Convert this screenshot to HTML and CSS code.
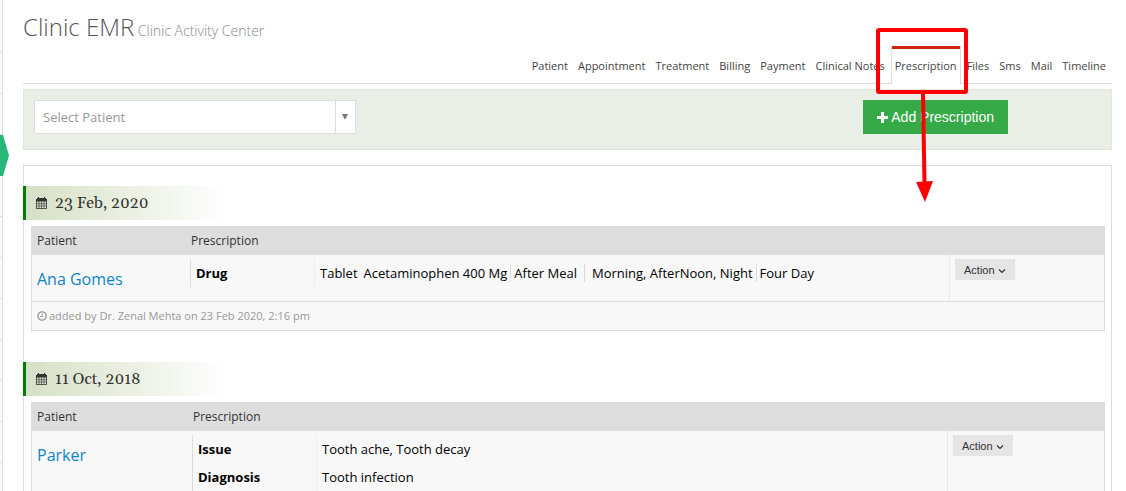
FILE: index.html
```html
<!DOCTYPE html>
<html lang="en">
<head>
<meta charset="utf-8">
<title>Clinic EMR</title>
<link rel="stylesheet" href="styles.css">
</head>
<body>
<svg class="sprite" aria-hidden="true">
  <symbol id="calendar" viewBox="0 0 11 12"><path fill-rule="evenodd" d="M0 2h1V1h1V0h1v1h5V0h1v1h1v1h1v9.500l-.5.500H.5L0 11.500zM.8 4.500v6.700h9.400V4.500z"/><path d="M3 4v8M5.500 4v8M8 4v8M.5 6.700h10M.5 9h10" stroke="currentColor" stroke-width=".6"/></symbol>
  <symbol id="chevron" viewBox="0 0 8 6"><path d="M1 1.500 4 4.500 7 1.500" fill="none" stroke="currentColor" stroke-width="1.200"/></symbol>
  <symbol id="clock" viewBox="0 0 10 10"><circle cx="5" cy="5" r="4.200" fill="none" stroke="currentColor" stroke-width="1.300"/><path d="M5.300 2.500v3H3" fill="none" stroke="currentColor"/></symbol>
  <symbol id="plus" viewBox="0 0 11 11"><path d="M4 0h3v4h4v3H7v4H4V7H0V4h4z"/></symbol>
</svg>
<div class="page">
  <aside class="rail">
    <span class="rail-item first"></span><span class="rail-item"></span><span class="rail-item"></span><span class="rail-item current"></span><span class="rail-item"></span><span class="rail-item"></span><span class="rail-item"></span><span class="rail-item"></span><span class="rail-item"></span><span class="rail-item"></span><span class="rail-item"></span>
  </aside>
  <main class="main">
    <h1 class="title">Clinic EMR<small> Clinic Activity Center</small></h1>
    <nav class="tabs">
      <a class="tab" href="#">Patient</a>
      <a class="tab" href="#">Appointment</a>
      <a class="tab" href="#">Treatment</a>
      <a class="tab" href="#">Billing</a>
      <a class="tab" href="#">Payment</a>
      <a class="tab" href="#">Clinical Notes</a>
      <span class="tab-mark">
        <a class="tab active" href="#">Prescription</a>
        <svg class="callout" viewBox="0 0 92 174" width="92" height="174" aria-hidden="true">
          <rect x="2" y="2" width="88" height="62" rx="1" fill="none" stroke="#f00" stroke-width="4"/>
          <path d="M47 66l1.500 90" stroke="#f00" stroke-width="4"/>
          <path d="M40 154l17-1-8 21z" fill="#f00"/>
        </svg>
      </span>
      <a class="tab" href="#">Files</a>
      <a class="tab" href="#">Sms</a>
      <a class="tab" href="#">Mail</a>
      <a class="tab" href="#">Timeline</a>
    </nav>
    <div class="toolbar">
      <span class="picker">
        <select class="picker-select" aria-label="Select Patient"><option>Select Patient</option></select>
        <span class="picker-arrow"><svg width="6" height="6" viewBox="0 0 6 6"><path d="M0 0h6L3.500 5h-1z" fill="#777"/></svg></span>
      </span>
      <button class="add" type="button"><svg class="icon-plus"><use href="#plus"/></svg>Add Prescription</button>
    </div>
    <section class="panel">
      <h2 class="date"><svg class="icon-calendar"><use href="#calendar"/></svg>23 Feb, 2020</h2>
      <table class="record">
        <colgroup><col class="col-name"><col><col class="col-action"></colgroup>
        <thead><tr><th>Patient</th><th>Prescription</th><th></th></tr></thead>
        <tbody>
          <tr class="entry">
            <td class="name"><a href="#">Ana Gomes</a></td>
            <td class="info">
              <table class="details">
                <tr><th scope="row">Drug</th><td><div class="drug"><span class="dose"><span>Tablet</span><span>Acetaminophen 400 Mg</span></span><span class="meal">After Meal</span><span class="times">Morning, AfterNoon, Night</span><span>Four Day</span></div></td></tr>
              </table>
            </td>
            <td class="action-cell"><button class="action" type="button">Action <svg class="icon-chevron"><use href="#chevron"/></svg></button></td>
          </tr>
          <tr class="added"><td colspan="3"><svg class="icon-clock"><use href="#clock"/></svg>added by Dr. Zenal Mehta on 23 Feb 2020, 2:16 pm</td></tr>
        </tbody>
      </table>
      <h2 class="date"><svg class="icon-calendar"><use href="#calendar"/></svg>11 Oct, 2018</h2>
      <table class="record wide">
        <colgroup><col class="col-name"><col><col class="col-action"></colgroup>
        <thead><tr><th>Patient</th><th>Prescription</th><th></th></tr></thead>
        <tbody>
          <tr class="entry">
            <td class="name"><a href="#">Parker</a></td>
            <td class="info">
              <table class="details">
                <tr><th scope="row">Issue</th><td>Tooth ache, Tooth decay</td></tr>
                <tr><th scope="row">Diagnosis</th><td>Tooth infection</td></tr>
              </table>
            </td>
            <td class="action-cell"><button class="action" type="button">Action <svg class="icon-chevron"><use href="#chevron"/></svg></button></td>
          </tr>
        </tbody>
      </table>
    </section>
  </main>
</div>
</body>
</html>
```
FILE: styles.css
```css
* { box-sizing: border-box; }
body {
  margin: 0;
  background: #fff;
  color: #333;
  font: 13px/18px "Open Sans", sans-serif;
}
a { color: inherit; text-decoration: none; }
.sprite { display: none; }
.page { display: flex; height: 100vh; overflow: hidden; }

.rail {
  display: flex;
  flex-direction: column;
  flex: none;
  width: 3px;
  background: #fafafa;
  border-right: 1px solid #ddd;
}
.rail-item { position: relative; flex: none; height: 41px; border-bottom: 1px solid #ddd; }
.rail-item.first { height: 53px; }
.rail-item.current { border: 0; background: #28b779; }
.rail-item.current::after {
  content: "";
  position: absolute;
  top: 0;
  left: 2px;
  width: 7px;
  height: 41px;
  background: #28b779;
  clip-path: polygon(0 0, 1px 0, 100% 50%, 1px 100%, 0 100%);
}

.main { flex: 1; min-width: 0; padding: 8px 14px 0 20px; }
.title { margin: 0; color: #555; font-size: 24px; font-weight: 300; line-height: 38px; }
.title small { color: #888; font-size: 14px; line-height: 14px; }

.tabs {
  display: flex;
  justify-content: flex-end;
  gap: 2px;
  padding-right: 2px;
  border-bottom: 1px solid #ddd;
}
.tab {
  display: block;
  height: 37px;
  padding: 8px 3px 0;
  border: 1px solid transparent;
  border-top-width: 3px;
  border-bottom: 0;
  color: #444;
  font-size: 11px;
  white-space: nowrap;
}
.tab.active { height: 38px; border-color: #ddd; border-top: 0; padding-top: 11px; background: linear-gradient(#d12610 3px, #fff 3px); }
.tab-mark { position: relative; margin-bottom: -1px; }
.callout { position: absolute; z-index: 1; top: -18px; left: -15px; pointer-events: none; }

.toolbar {
  display: flex;
  justify-content: space-between;
  align-items: flex-start;
  min-height: 61px;
  margin-top: 5px;
  padding: 10px 103px 10px 10px;
  border: 1px solid #dfe9d8;
  background: #e9efe7;
}
.picker { display: flex; width: 322px; height: 34px; border: 1px solid #ddd; background: #fff; }
.picker-select {
  flex: 1;
  padding: 0 8px;
  border: 0;
  appearance: none;
  background: #fff;
  color: #999;
  font: 13px "Open Sans", sans-serif;
}
.picker-arrow { display: flex; align-items: center; justify-content: center; width: 20px; padding-right: 1px; border-left: 1px solid #ddd; }
.add {
  display: flex;
  align-items: center;
  gap: 3px;
  height: 34px;
  padding: 0 14px;
  border: 0;
  background: #35aa47;
  color: #fff;
  font: 14px "Liberation Sans", Arial, sans-serif;
}
.icon-plus { width: 11px; height: 11px; fill: #fff; }

.panel { min-height: 400px; margin-top: 15px; padding: 20px 6px 0 7px; border: 1px solid #ddd; }
.date {
  display: flex;
  align-items: center;
  gap: 8px;
  width: 203px;
  height: 34px;
  margin: 0 0 6px -8px;
  padding-left: 10px;
  border-left: 3px solid #008000;
  background: linear-gradient(90deg, #d6e0c5, #fff);
  color: #333;
  font: 16px Georgia, Gelasio, "DejaVu Serif", serif;
}
.icon-calendar { width: 11px; height: 12px; fill: #333; }

.record {
  width: 100%;
  margin-bottom: 31px;
  border: 1px solid #ddd;
  border-spacing: 0;
  table-layout: fixed;
  background: #f8f8f8;
}
.col-name { width: 158px; }
.col-action { width: 155px; }
.wide .col-name { width: 160px; }
.wide .col-action { width: 157px; }
.record > thead th {
  height: 28px;
  padding: 0 5px;
  background: #ddd;
  font-size: 12px;
  font-weight: 400;
  text-align: left;
}
.record > thead th:nth-child(2) { padding-left: 1px; }
.entry > td { padding: 4px 5px; vertical-align: top; }
.entry > .info { height: 46px; padding: 4px 0; }
.entry > .name { padding-top: 12px; color: #0d86c9; font-size: 16px; line-height: 24px; }
.entry > .action-cell { border-left: 1px solid #e8e8e8; padding-top: 4px; }
.added td {
  height: 29px;
  padding: 0 5px;
  border-top: 1px solid #ddd;
  color: #999;
  font-size: 11px;
}
.icon-clock { width: 10px; height: 10px; margin-right: 2px; vertical-align: -1px; }

.details { width: 100%; border-spacing: 0; color: #000; }
.details th,
.details td { height: 28px; padding: 0 5px; border-left: 1px solid #ddd; text-align: left; }
.details th { width: 124px; font-weight: 700; }
.details td { border-color: #eee; }
.drug { display: flex; white-space: nowrap; }
.drug > span + span { padding-left: 3px; border-left: 1px solid #ddd; }
.dose { display: flex; gap: 6px; padding-right: 3px; }
.meal { padding-right: 7px; }
.drug > .times { padding-left: 7px; padding-right: 3px; }

.action {
  height: 21px;
  padding: 0 9px;
  border: 0;
  background: #e5e5e5;
  color: #333;
  font: 11px "Liberation Sans", Arial, sans-serif;
}
.icon-chevron { width: 8px; height: 6px; }
```
